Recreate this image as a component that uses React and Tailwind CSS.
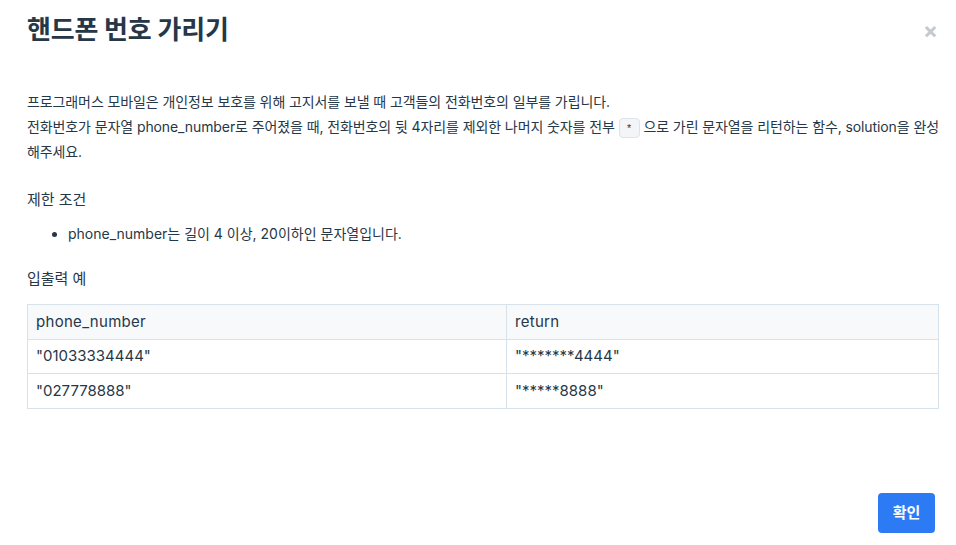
import React from "react";

export default function App() {
  return (
    <div className="w-[956px] h-[545px] bg-white text-[#263747] font-['Inter','Noto_Sans_CJK_KR',sans-serif] flex flex-col">
      <div className="flex items-center justify-between pl-[27px] pr-[18px] h-[60px]">
        <h1 className="text-[26px] font-bold leading-none tracking-[-0.2px]">핸드폰 번호 가리기</h1>
        <span className="text-[#c5c9ce] text-[22px] font-bold leading-none">×</span>
      </div>
      <div className="pl-[27px] pr-[17px] pt-[29px] text-[14px] flex-1">
        <p className="leading-[25px] break-all tracking-[-0.1px]">
          프로그래머스 모바일은 개인정보 보호를 위해 고지서를 보낼 때 고객들의 전화번호의 일부를 가립니다.
          <br />
          전화번호가 문자열 phone_number로 주어졌을 때, 전화번호의 뒷 4자리를 제외한 나머지 숫자를 전부{" "}
          <code className="inline-block w-[21px] h-[20px] -my-[4px] text-center leading-[20px] text-[11px] bg-[#f3f5f8] border border-[#dde3ea] rounded-[4px] font-['Liberation_Mono',monospace] align-middle">*</code>{" "}
          으로 가린 문자열을 리턴하는 함수, solution을 완성해주세요.
        </p>
        <h3 className="mt-[23px] text-[15px] leading-[25px]">제한 조건</h3>
        <ul className="mt-[9px] list-disc pl-[41px] leading-[25px]">
          <li>phone_number는 길이 4 이상, 20이하인 문자열입니다.</li>
        </ul>
        <h3 className="mt-[20px] text-[15px] leading-[25px]">입출력 예</h3>
        <table className="mt-[13px] w-full border-collapse text-[15px]">
          <thead>
            <tr className="bg-[#f8f9fb]">
              <th className="w-[479px] border border-[#d7e2eb] h-[35px] px-[8px] text-left font-normal tracking-[0.3px]">phone_number</th>
              <th className="border border-[#d7e2eb] h-[35px] px-[8px] text-left font-normal tracking-[0.3px]">return</th>
            </tr>
          </thead>
          <tbody>
            <tr>
              <td className="border border-[#d7e2eb] h-[34px] px-[8px]">"01033334444"</td>
              <td className="border border-[#d7e2eb] h-[34px] px-[8px]">"*******4444"</td>
            </tr>
            <tr>
              <td className="border border-[#d7e2eb] h-[35px] px-[8px]">"027778888"</td>
              <td className="border border-[#d7e2eb] h-[35px] px-[8px]">"*****8888"</td>
            </tr>
          </tbody>
        </table>
      </div>
      <div className="flex justify-end pr-[21px] pb-[12px]">
        <button className="w-[57px] h-[40px] rounded-[4px] bg-[#2c7bf5] text-white text-[15px] font-bold">확인</button>
      </div>
    </div>
  );
}
